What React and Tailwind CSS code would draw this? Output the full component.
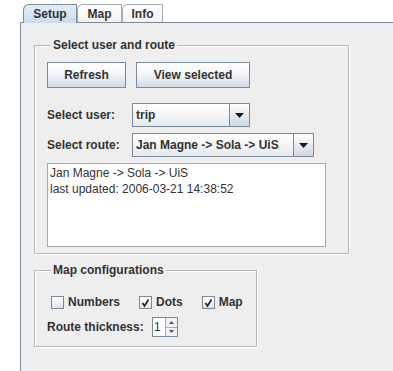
import React from "react";

const font = { fontFamily: '"Liberation Sans", Arial, sans-serif' };

function Tab({ label, width, selected }) {
  return (
    <div
      className={
        "flex h-[19px] items-center justify-center rounded-tl-[6px] border border-b-0 text-[12px] font-bold leading-[14px] text-[#333] " +
        (selected
          ? "z-10 border-[#7a8a99] bg-gradient-to-b from-[#e4edf7] to-[#c9dbee]"
          : "border-[#a4acb4] bg-gradient-to-b from-white to-[#f2f2f2]")
      }
      style={{ width }}
    >
      {label}
    </div>
  );
}

function Group({ title, className, children }) {
  return (
    <div
      className={
        "border border-[#b8b8b8] shadow-[inset_1px_1px_0_#ffffff,1px_1px_0_#ffffff] " +
        className
      }
    >
      <div className="-mt-[8px] ml-[4px] w-fit bg-[#eeeeee] px-[2px] text-[12px] font-bold leading-[14px] text-[#333]">
        {title}
      </div>
      {children}
    </div>
  );
}

function Button({ label, width }) {
  return (
    <div
      className="flex h-[26px] items-center justify-center border border-[#7a8a99] bg-gradient-to-b from-white via-[#f1f4f8] to-[#d2dae5] text-[12px] font-bold text-[#333]"
      style={{ width }}
    >
      {label}
    </div>
  );
}

function Arrow() {
  return (
    <svg width="9" height="5" viewBox="0 0 9 5">
      <polygon points="0,0 9,0 4.5,5" fill="#1a1a1a" />
    </svg>
  );
}

function Combo({ value, width }) {
  return (
    <div
      className="flex h-[24px] border border-[#7a8a99] bg-gradient-to-b from-white to-[#e6e9ee]"
      style={{ width }}
    >
      <div className="flex flex-1 items-center pl-[3px] text-[12px] font-bold text-[#333]">
        {value}
      </div>
      <div className="flex w-[20px] items-center justify-center border-l border-[#7a8a99] bg-gradient-to-b from-white to-[#cfd8e3]">
        <Arrow />
      </div>
    </div>
  );
}

function Check({ label, checked, className = "" }) {
  return (
    <div className={"flex items-center gap-[4px] " + className}>
      <div className="flex h-[13px] w-[13px] items-center justify-center border border-[#7a8a99] bg-gradient-to-b from-white to-[#dfe4ea]">
        {checked && (
          <svg width="11" height="11" viewBox="0 0 11 11">
            <path d="M2.5 6 L4.5 9 L8.5 2.5" stroke="#222" strokeWidth="1.6" fill="none" />
          </svg>
        )}
      </div>
      <span className="text-[12px] font-bold leading-[16px] text-[#333]">{label}</span>
    </div>
  );
}

function Spinner() {
  return (
    <div className="flex h-[20px] w-[26px] border border-[#7a8a99] bg-white">
      <div className="flex flex-1 items-center pl-[1px] text-[12px] text-[#333]">1</div>
      <div className="flex w-[12px] flex-col border-l border-[#a4acb4]">
        <div className="flex flex-1 items-center justify-center border-b border-[#a4acb4] bg-[#f0f2f5]">
          <svg width="5" height="3" viewBox="0 0 5 3">
            <polygon points="0,3 5,3 2.5,0" fill="#555" />
          </svg>
        </div>
        <div className="flex flex-1 items-center justify-center bg-[#f0f2f5]">
          <svg width="5" height="3" viewBox="0 0 5 3">
            <polygon points="0,0 5,0 2.5,3" fill="#555" />
          </svg>
        </div>
      </div>
    </div>
  );
}

export default function App() {
  return (
    <div className="flex h-[371px] w-[393px] flex-col overflow-hidden bg-white pl-[20px] pt-[4px]" style={font}>
      <div className="-mb-px flex pl-[3px]">
        <Tab label="Setup" width={54} selected />
        <Tab label="Map" width={45} />
        <Tab label="Info" width={41} />
      </div>
      <div className="flex-1 border-l border-t border-[#7a8a99] bg-[#eeeeee] pl-[13px]">
        <Group title="Select user and route" className="mt-[22px] w-[315px] px-[12px] pb-[6px]">
          <div className="mt-[10px] flex gap-[10px]">
            <Button label="Refresh" width={79} />
            <Button label="View selected" width={114} />
          </div>
          <div className="mt-[15px] flex items-center">
            <span className="w-[85px] text-[12px] font-bold text-[#333]">Select user:</span>
            <Combo value="trip" width={118} />
          </div>
          <div className="mt-[6px] flex items-center">
            <span className="w-[85px] text-[12px] font-bold text-[#333]">Select route:</span>
            <Combo value="Jan Magne -> Sola -> UiS" width={182} />
          </div>
          <div className="mt-[6px] h-[84px] w-[279px] border border-[#a8a8a8] bg-white pl-[2px] pt-[1px] text-[12px] leading-[16px] text-[#333]">
            <div>Jan Magne -&gt; Sola -&gt; UiS</div>
            <div>last updated: 2006-03-21 14:38:52</div>
          </div>
        </Group>
        <Group title="Map configurations" className="mt-[16px] w-[223px] px-[12px] pb-[9px]">
          <div className="mt-[17px] flex items-center pl-[4px]">
            <Check label="Numbers" />
            <Check label="Dots" checked className="ml-[19px]" />
            <Check label="Map" checked className="ml-[19px]" />
          </div>
          <div className="mt-[7px] flex items-center">
            <span className="w-[105px] text-[12px] font-bold text-[#333]">Route thickness:</span>
            <Spinner />
          </div>
        </Group>
      </div>
    </div>
  );
}
